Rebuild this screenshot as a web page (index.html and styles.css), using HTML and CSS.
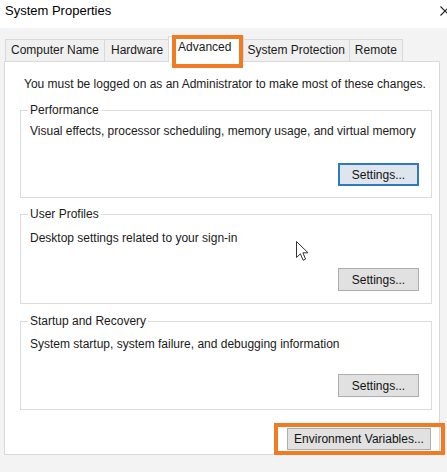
FILE: index.html
```html
<!DOCTYPE html>
<html lang="en">
<head>
<meta charset="utf-8">
<title>System Properties</title>
<link rel="stylesheet" href="styles.css">
</head>
<body>
<div class="window">
  <header class="titlebar">
    <span class="title">System Properties</span>
    <svg class="close" width="10" height="10" viewBox="0 0 10 10"><path d="M0.5 0.5 L9.5 9.5 M9.5 0.5 L0.5 9.5" stroke="#222" stroke-width="1.1" fill="none"/></svg>
  </header>
  <nav class="tabs">
    <div class="tab tab-cn">Computer Name</div>
    <div class="tab tab-hw">Hardware</div>
    <div class="tab tab-active">Advanced<span class="highlight"></span></div>
    <div class="tab tab-sp">System Protection</div>
    <div class="tab tab-rm">Remote</div>
  </nav>
  <section class="panel">
    <p class="notice">You must be logged on as an Administrator to make most of these changes.</p>
    <fieldset class="group group-perf">
      <legend>Performance</legend>
      <p class="desc">Visual effects, processor scheduling, memory usage, and virtual memory</p>
      <div class="actions"><button class="btn btn-default">Settings...</button></div>
    </fieldset>
    <fieldset class="group group-users">
      <legend>User Profiles</legend>
      <p class="desc">Desktop settings related to your sign-in</p>
      <div class="actions"><button class="btn">Settings...</button></div>
    </fieldset>
    <fieldset class="group group-startup">
      <legend>Startup and Recovery</legend>
      <p class="desc">System startup, system failure, and debugging information</p>
      <div class="actions"><button class="btn">Settings...</button></div>
    </fieldset>
    <div class="footer">
      <span class="callout"><button class="btn btn-wide">Environment Variables...</button></span>
    </div>
  </section>
  <svg class="cursor" width="13" height="21" viewBox="0 0 13 21"><path d="M0.5 0.5 L0.5 16.5 L4.4 12.8 L7.1 19.2 L9.6 18.1 L6.9 11.8 L12 11.8 Z" fill="#fff" stroke="#333" stroke-width="1" stroke-linejoin="round"/></svg>
</div>
</body>
</html>
```

FILE: styles.css
```css
html, body {
  margin: 0;
  padding: 0;
}
body {
  width: 447px;
  height: 472px;
  overflow: hidden;
  background: #f3f3f3;
  font-family: "Liberation Sans", Arial, sans-serif;
  font-size: 12px;
  color: #1a1a1a;
}
.window {
  position: relative;
  height: 472px;
  background: #f3f3f3;
}
.titlebar {
  box-sizing: border-box;
  height: 28px;
  display: flex;
  align-items: flex-start;
  justify-content: space-between;
  background: #ffffff;
  padding: 3px 0 0 5px;
}
.title {
  font-size: 13px;
  line-height: 16px;
  color: #000;
}
.close {
  margin-top: 3px;
  margin-right: -3px;
}
.tabs {
  display: flex;
  height: 22px;
  margin-top: 11px;
  padding-left: 5px;
}
.tab {
  box-sizing: border-box;
  height: 22px;
  border: 1px solid #d9d9d9;
  border-bottom: none;
  background: #f0f0f0;
  padding: 0 5px;
  line-height: 20px;
  margin-left: -1px;
  white-space: nowrap;
}
.tab-cn {
  margin-left: 0;
}
.tab-hw {
  padding: 0 6px;
}
.tab-sp {
  padding: 0 4px;
}
.tab-active {
  position: relative;
  z-index: 2;
  height: 26px;
  margin-top: -3px;
  margin-left: -2px;
  margin-right: -1px;
  background: #ffffff;
  padding: 0 12px 0 9px;
}
.highlight {
  position: absolute;
  left: 3px;
  right: 0;
  top: -2px;
  bottom: -6px;
  border: 4px solid #f07b22;
}
.panel {
  box-sizing: border-box;
  height: 394px;
  margin: 0 7px 0 4px;
  border: 1px solid #d9d9d9;
  background: #ffffff;
  padding: 0 7px 0 15px;
}
.notice {
  margin: 14px 0 0 4px;
  line-height: 16px;
}
.group {
  margin: 0;
  padding: 0 12px 12px 9px;
  border: 1px solid #dcdcdc;
  min-width: 0;
}
.group legend {
  padding: 0 2px;
  margin-left: -2px;
  line-height: 14px;
}
.desc {
  margin: 0;
  line-height: 16px;
}
.actions {
  display: flex;
  justify-content: flex-end;
  margin-top: 22px;
}
.group-perf {
  margin-top: 11px;
  padding-bottom: 11px;
}
.group-perf .desc {
  margin-top: 6px;
}
.group-perf .actions {
  margin-top: 24px;
}
.group-users {
  margin-top: 9px;
}
.group-users .desc {
  margin-top: 9px;
}
.group-startup {
  margin-top: 10px;
}
.group-startup .desc {
  margin-top: 8px;
}
.btn {
  box-sizing: border-box;
  width: 81px;
  height: 23px;
  padding: 0;
  margin: 0;
  background: #e1e1e1;
  border: 1px solid #adadad;
  font-family: inherit;
  font-size: 12px;
  color: #111;
}
.btn-default {
  border: 2px solid #2f78c4;
  background: #dfe5ec;
}
.footer {
  display: flex;
  justify-content: flex-end;
  margin-top: 18px;
  padding-right: 1px;
}
.callout {
  position: relative;
  display: flex;
}
.callout::after {
  content: "";
  position: absolute;
  left: -13px;
  right: -14px;
  top: -5px;
  bottom: -5px;
  border: 4px solid #f07b22;
}
.btn-wide {
  width: 144px;
  height: 22px;
}
.cursor {
  position: absolute;
  left: 296px;
  top: 241px;
}
```
